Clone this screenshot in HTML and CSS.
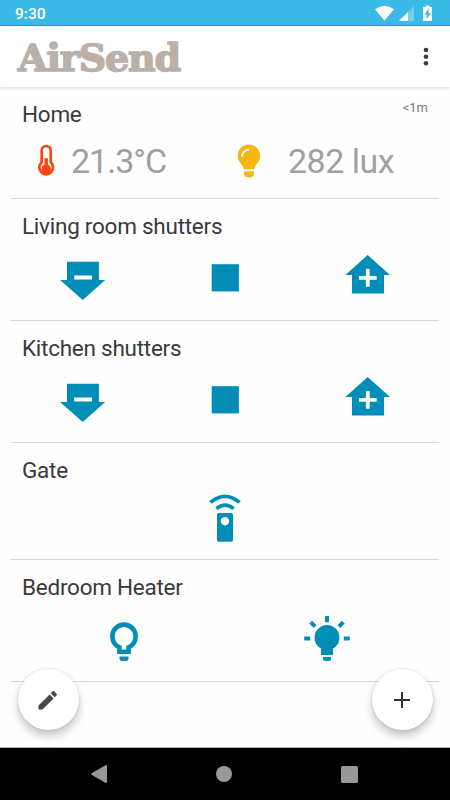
FILE: index.html
```html
<!DOCTYPE html>
<html lang="en">
<head>
  <meta charset="UTF-8" />
  <meta name="viewport" content="width=device-width, initial-scale=1.0"/>
  <title>AirSend</title>
  <link rel="stylesheet" href="styles.css">
</head>
<body>
  <svg class="defs" width="0" height="0">
    <symbol id="icon-down" viewBox="0 0 50 50">
      <path d="M10 9.700h31.900V28h6.300L25.700 48 3.100 28H10zM17.200 23.600v3.800H35v-3.800z" fill-rule="evenodd"/>
    </symbol>
    <symbol id="icon-stop" viewBox="0 0 50 50">
      <path d="M11.7 12.2h27.2v27.2H11.7z"/>
    </symbol>
    <symbol id="icon-up" viewBox="0 0 50 50">
      <path d="M24.700 3L47 23h-6v18.400H9V23H2.400zM22.900 17v7h-7v3.800h7v7h3.800v-7h7V24h-7v-7z" fill-rule="evenodd"/>
    </symbol>
  </svg>

  <div class="status-bar">
    <span class="clock">9:30</span>
    <svg class="status-icons" width="60" height="18" viewBox="0 0 60 18" fill="#fff">
      <path d="M2 4.200Q11.500-2.800 21 4.200L11.500 15.500z"/>
      <path d="M41 1v15H26z" opacity=".3"/>
      <path d="M35 7v9h-9z"/>
      <path d="M52.500.5h4V2H59v14h-9V2h2.500zM55.600 3.500l-4 6.200h2.100v4.600l4-6.400h-2.100z" fill-rule="evenodd"/>
    </svg>
  </div>

  <header class="toolbar">
    <h1 class="logo">AirSend</h1>
    <svg width="6" height="20" viewBox="0 0 6 20" fill="#3c3c3c">
      <circle cx="3" cy="3" r="2.3"/>
      <circle cx="3" cy="9.7" r="2.3"/>
      <circle cx="3" cy="16.3" r="2.3"/>
    </svg>
  </header>

  <main class="devices">
    <section class="device home">
      <div class="device-head">
        <h2>Home</h2>
        <span class="updated">&lt;1m</span>
      </div>
      <div class="sensors">
        <div class="sensor">
          <svg width="18" height="34" viewBox="0 0 18 34">
            <path d="M4.700 18.200V6.500a4.500 4.500 0 0 1 9 0v11.700a6.900 6.900 0 1 1-9 0z" fill="#fff" stroke="#ff4310" stroke-width="2.700"/>
            <path d="M7.500 14.200h3.400v6.300a4.700 4.700 0 1 1-3.400 0z" fill="#ff4310"/>
          </svg>
          <span class="value">21.3°C</span>
        </div>
        <div class="sensor light">
          <svg width="24" height="34" viewBox="0 0 24 34">
            <path d="M6.5 25.2c0-5.3-5.8-6.5-5.800-13.500a11.200 11.200 0 0 1 22.500 0c0 7-5.800 8.200-5.800 13.500z" fill="#f5b712"/>
            <path d="M7 27.3h10v2q0 4-4 4h-2q-4 0-4-4z" fill="#f5b712"/>
            <path d="M5 12.7a7 7 0 0 1 7.200-7" fill="none" stroke="#fff" stroke-width="1.700"/>
          </svg>
          <span class="value">282 lux</span>
        </div>
      </div>
    </section>

    <section class="device">
      <h2>Living room shutters</h2>
      <div class="actions">
        <svg><use href="#icon-down"/></svg>
        <svg><use href="#icon-stop"/></svg>
        <svg><use href="#icon-up"/></svg>
      </div>
    </section>

    <section class="device">
      <h2>Kitchen shutters</h2>
      <div class="actions">
        <svg><use href="#icon-down"/></svg>
        <svg><use href="#icon-stop"/></svg>
        <svg><use href="#icon-up"/></svg>
      </div>
    </section>

    <section class="device gate">
      <h2>Gate</h2>
      <div class="actions">
        <svg viewBox="0 0 50 50">
          <path d="M18.5 21h13q1.500 0 1.500 1.500V48q0 1.700-1.500 1.700h-13Q17 49.700 17 48V22.500q0-1.500 1.500-1.500zM25 25a4.200 4.200 0 1 0 .01 0z" fill-rule="evenodd"/>
          <path d="M10.400 10.400Q25-1.800 39.600 10.400M16.400 16.600q8.600-6.800 17.200 0" fill="none" stroke="#008db8" stroke-width="3.700"/>
        </svg>
      </div>
    </section>

    <section class="device">
      <h2>Bedroom Heater</h2>
      <div class="actions two">
        <svg viewBox="0 0 50 50">
          <path d="M20.400 38.700v-4.400C16.500 32.500 13.400 28.700 13.400 23.200a11.600 11.600 0 0 1 23.200 0c0 5.500-3.100 9.300-7 11.100v4.400z" fill="none" stroke="#008db8" stroke-width="4.600"/>
          <path d="M20.500 43.500h9v1.800q0 2.700-2.700 2.700h-3.600q-2.700 0-2.700-2.700z"/>
        </svg>
        <svg viewBox="0 0 50 50">
          <path d="M19 42v-6.500a12.500 12.500 0 1 1 12 0V42z"/>
          <path d="M21 44h8v1.500q0 2.500-2.500 2.500h-3Q21 48 21 45.500z"/>
          <path d="M25 3v6.300M2.200 25.500h6M41.800 25.500h6M8.700 9.200l4.400 4.400M41.300 9.200l-4.400 4.400" fill="none" stroke="#008db8" stroke-width="4"/>
        </svg>
      </div>
    </section>
  </main>

  <button class="fab edit">
    <svg width="24" height="24" viewBox="0 0 24 24" fill="#484848">
      <path d="M2.500 17.500v4h4L17.600 10.400l-4-4zM20.700 7.300a1 1 0 0 0 0-1.400l-2.600-2.600a1 1 0 0 0-1.400 0l-2 2 4 4z"/>
    </svg>
  </button>
  <button class="fab add">
    <svg width="16" height="16" viewBox="0 0 16 16" stroke="#333" stroke-width="2">
      <path d="M8 0v16M0 8h16"/>
    </svg>
  </button>

  <nav class="nav-bar">
    <svg width="16" height="18" viewBox="0 0 16 18"><path d="M14.800 0q1.200 0 1.200 1v16q0 1-1.200 1L.6 9.800q-1-.8 0-1.600z"/></svg>
    <svg width="16" height="16" viewBox="0 0 16 16"><circle cx="8" cy="8" r="8"/></svg>
    <svg width="17" height="17" viewBox="0 0 17 17"><rect width="17" height="17" rx="1.500"/></svg>
  </nav>
</body>
</html>
```
FILE: styles.css
```css
* {
  box-sizing: border-box;
}
body {
  margin: 0;
  height: 800px;
  display: flex;
  flex-direction: column;
  font-family: Roboto, sans-serif;
  background: #fefefe;
  overflow: hidden;
}
svg {
  display: block;
}
.defs {
  position: absolute;
}
.status-bar {
  height: 26px;
  padding: 0 17px 0 15px;
  display: flex;
  align-items: center;
  justify-content: space-between;
  background: #39bae7;
  border-bottom: 1px solid #13a7d8;
  color: #fff;
}
.clock {
  font-size: 15.5px;
  font-weight: 500;
  padding-top: 2px;
}
.status-icons {
  margin-top: 2px;
}
.toolbar {
  height: 61px;
  padding: 0 21px 0 18px;
  display: flex;
  align-items: center;
  justify-content: space-between;
  background: #fff;
  box-shadow: 0 1px 3px rgba(0, 0, 0, 0.16);
}
.logo {
  margin: 0;
  padding-top: 3px;
  font: bold 38px/44px "DejaVu Serif", serif;
  letter-spacing: -1.1px;
  color: #bab0a7;
  -webkit-text-stroke: 1.6px #bab0a7;
}
.devices {
  flex: 1;
  padding: 1px 11px 0;
}
.device {
  height: 122px;
  padding-top: 14px;
  border-bottom: 1px solid #d6d6d6;
}
.device h2 {
  margin: 0 0 0 11px;
  font-size: 22.5px;
  line-height: 26px;
  font-weight: 400;
  letter-spacing: -0.25px;
  color: #3a3a3a;
}
.home {
  height: 111px;
  padding-top: 13px;
}
.device-head {
  display: flex;
  justify-content: space-between;
}
.updated {
  margin-right: 11px;
  font-size: 13px;
  line-height: 14px;
  color: #777;
}
.sensors {
  display: grid;
  grid-template-columns: 200px 1fr;
  margin-top: 15px;
  padding-left: 26px;
}
.sensor {
  display: flex;
  align-items: center;
  gap: 16px;
  height: 38px;
}
.light {
  gap: 27px;
}
.value {
  font-size: 34px;
  line-height: 38px;
  letter-spacing: -1px;
  color: #a0a0a0;
}
.light .value {
  letter-spacing: -0.5px;
}
.gate {
  height: 117px;
}
.actions {
  display: grid;
  grid-template-columns: repeat(3, 1fr);
  justify-items: center;
  margin-top: 13px;
}
.gate .actions {
  grid-template-columns: 1fr;
  margin-top: 9px;
}
.actions.two {
  grid-template-columns: 1fr 1fr;
  padding: 0 11px;
}
.actions svg {
  width: 50px;
  height: 50px;
  fill: #008db8;
}
/* floating buttons sit over the list */
.fab {
  position: absolute;
  top: 669px;
  width: 61px;
  height: 61px;
  padding: 0;
  display: flex;
  align-items: center;
  justify-content: center;
  border: none;
  border-radius: 50%;
  background: #fff;
  box-shadow: 0 6px 9px rgba(0, 0, 0, 0.22), 0 0 3px rgba(0, 0, 0, 0.14);
}
.edit {
  left: 17.5px;
}
.add {
  right: 17.5px;
}
.nav-bar {
  height: 53px;
  padding: 0 92px 0 91px;
  display: flex;
  align-items: center;
  justify-content: space-between;
  background: #000;
  border-top: 1px solid #aaa;
}
.nav-bar svg {
  fill: #999;
}
```
